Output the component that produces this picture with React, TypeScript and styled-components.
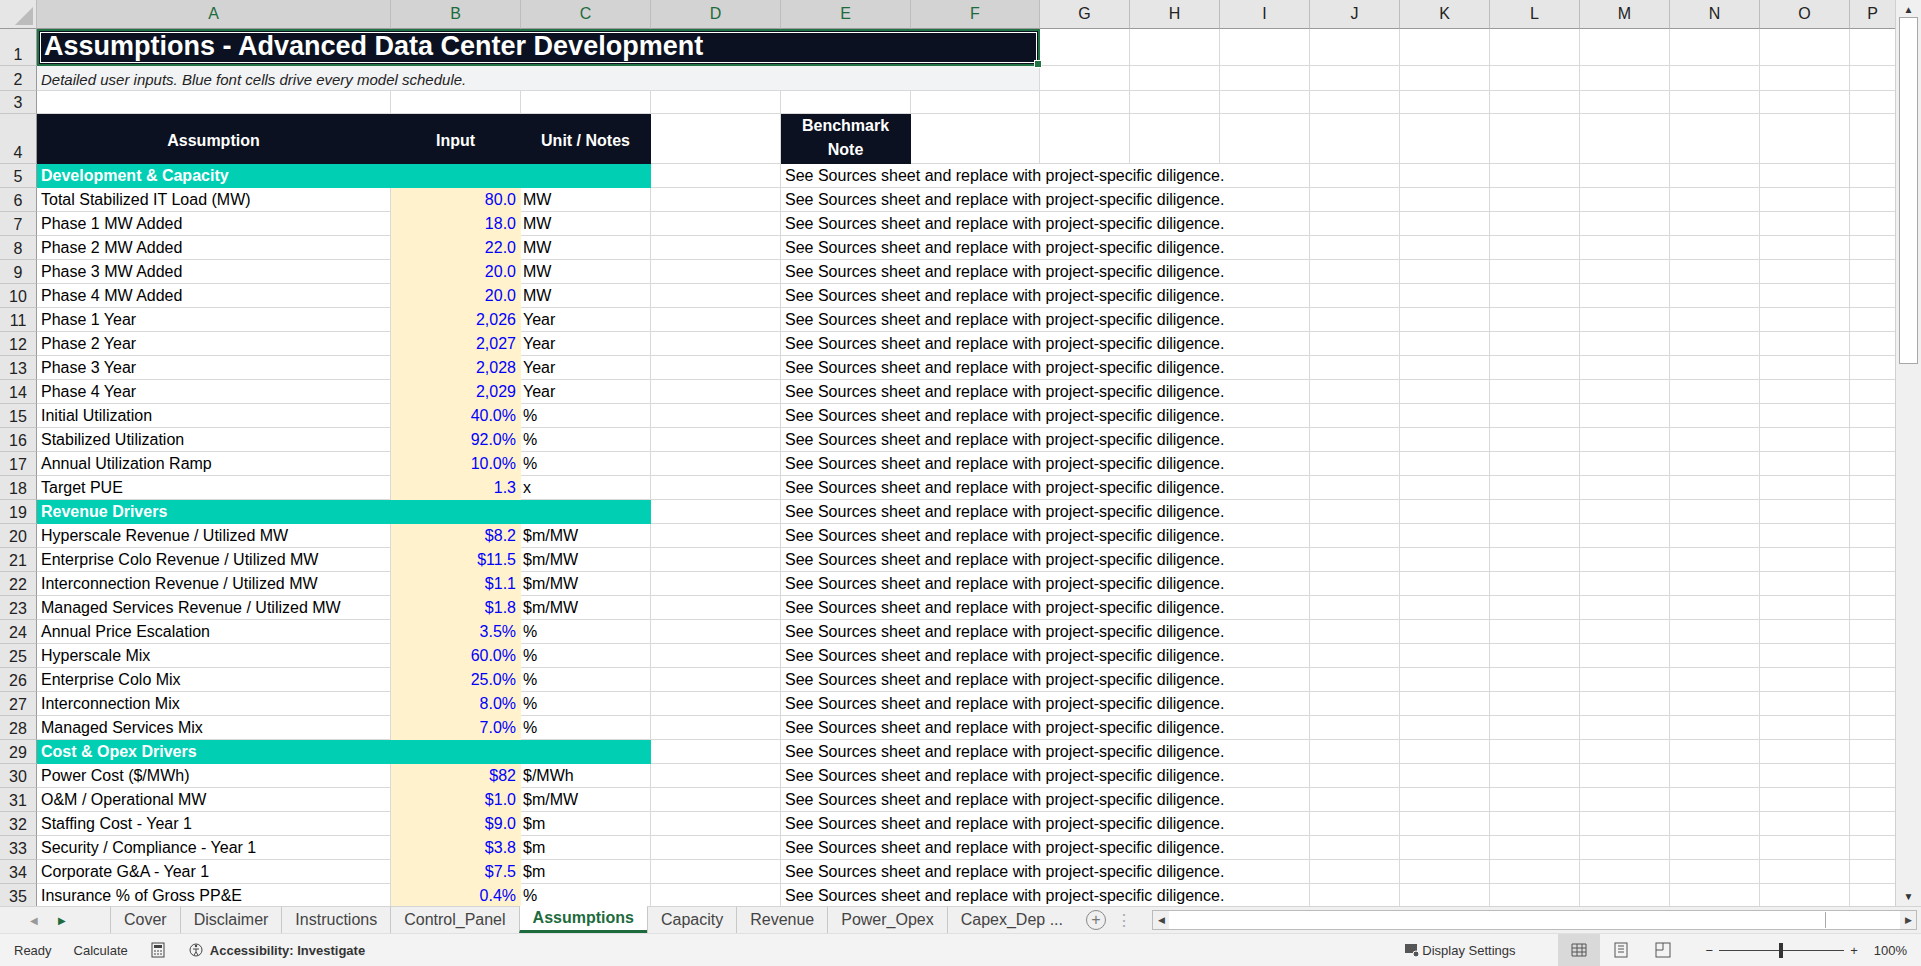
import React from "react";
import styled, { createGlobalStyle, css } from "styled-components";

const Global = createGlobalStyle`
  html, body { margin: 0; padding: 0; overflow: hidden; }
  body { font-family: "Liberation Sans", Arial, sans-serif; }
`;

const COLS = "37px 354px 130px 130px 130px 130px 129px repeat(9, 90px) 46px";
const NOTE = "See Sources sheet and replace with project-specific diligence.";

const Page = styled.div`
  width: 1921px; height: 966px; display: flex; flex-direction: column; background: #fff;
`;
const SheetArea = styled.div`
  flex: 1; display: flex; overflow: hidden;
`;
const Grid = styled.div`
  flex: 1; display: grid; grid-template-columns: ${COLS};
  grid-auto-rows: 24px; overflow: hidden; align-content: start;
  grid-template-rows: 29px 37px 25px 23px 50px;
`;
const ColHead = styled.div<{ $sel?: boolean }>`
  background: ${p => (p.$sel ? "#d3d3d3" : "#e6e6e6")};
  color: ${p => (p.$sel ? "#1d6b3c" : "#222")};
  border-right: 1px solid #bdbdbd; border-bottom: 1px solid #9a9a9a;
  display: flex; align-items: center; justify-content: center;
  font-size: 16px; box-sizing: border-box;
`;
const Corner = styled(ColHead)`
  background: #e6e6e6; position: relative;
  &::after { content: ""; position: absolute; right: 3px; bottom: 3px;
    border-left: 18px solid transparent; border-bottom: 18px solid #bcbcbc; }
`;
const RowHead = styled.div`
  background: #e6e6e6; border-right: 1px solid #9a9a9a; border-bottom: 1px solid #c8c8c8;
  display: flex; align-items: flex-end; justify-content: center; padding-bottom: 1px;
  font-size: 16px; color: #222; box-sizing: border-box;
`;
type Kind = "plain" | "dark" | "teal" | "input" | "sub";
const Cell = styled.div<{ $k?: Kind; $span?: number; $align?: string; $bold?: boolean }>`
  box-sizing: border-box; border-right: 1px solid #d9d9d9; border-bottom: 1px solid #d9d9d9;
  font-size: 16px; color: #000; white-space: nowrap; padding: 0 4px;
  display: flex; align-items: flex-end; padding-bottom: 2px;
  justify-content: ${p => p.$align || "flex-start"};
  ${p => p.$span && css`grid-column: span ${p.$span};`}
  ${p => p.$bold && css`font-weight: bold;`}
  ${p => p.$k === "dark" && css`background: #0b1120; color: #fff; font-weight: bold; border-color: #0b1120;`}
  ${p => p.$k === "teal" && css`background: #00cfb4; color: #fff; font-weight: bold; border-color: #00cfb4;`}
  ${p => p.$k === "input" && css`background: #fff2cc; color: #0000ff; border-color: #fff2cc;`}
  ${p => p.$k === "sub" && css`background: #f2f3f5; font-style: italic; font-size: 15px; color: #222;`}
`;
const Title = styled(Cell)`
  grid-column: span 6; background: #0b1120; color: #fff; font-weight: bold; font-size: 27px;
  border: 2px solid #217346; outline: 1px solid #fff; outline-offset: -4px; padding-left: 5px;
  position: relative;
  &::after { content: ""; position: absolute; right: -4px; bottom: -4px; width: 6px; height: 6px; background: #217346; border: 1px solid #fff; }
`;
const HeadCell = styled(Cell)`
  background: #0b1120; color: #fff; font-weight: bold; border-color: #0b1120;
  justify-content: center; align-items: center; text-align: center; white-space: normal; line-height: 24px;
  padding-top: 6px;
`;
const VScroll = styled.div`
  width: 25px; background: #f0f0f0; border-left: 1px solid #d0d0d0; display: flex; flex-direction: column;
  align-items: center; justify-content: space-between; font-size: 10px; color: #333;
`;
const Thumb = styled.div`
  width: 17px; height: 345px; background: #fff; border: 1px solid #a8a8a8; margin-top: 2px; flex: none;
`;
const TabBar = styled.div`
  height: 26px; background: #f0f0f0; display: flex; align-items: stretch; font-size: 16px; color: #444;
  border-top: 1px solid #d4d4d4;
`;
const Arrows = styled.div`
  width: 110px; display: flex; align-items: center; gap: 20px; padding-left: 30px; color: #999; font-size: 10px;
  box-sizing: border-box;
`;
const Tab = styled.div<{ $active?: boolean }>`
  padding: 0 13px; display: flex; align-items: center; border-left: 1px solid #c8c8c8;
  ${p => p.$active && css`background: #fff; color: #1d6b3c; font-weight: bold; border-bottom: 3px solid #1d6b3c; margin-top: -1px;`}
`;
const AddBtn = styled.div`
  width: 18px; height: 18px; border: 1px solid #888; border-radius: 50%; margin: auto 10px;
  display: flex; align-items: center; justify-content: center; color: #777; font-size: 16px; line-height: 1;
`;
const HScroll = styled.div`
  flex: 1; margin: 3px 4px 3px 20px; display: flex; align-items: stretch; border: 1px solid #bbb; background: #fff;
`;
const HBtn = styled.div`
  width: 16px; display: flex; align-items: center; justify-content: center; font-size: 9px; background: #f0f0f0;
`;
const HThumb = styled.div` width: 655px; border-right: 1px solid #aaa; margin: 1px; `;
const Status = styled.div`
  height: 32px; background: #f3f3f3; display: flex; align-items: center; font-size: 13px; color: #333;
  padding: 0 14px; gap: 22px; border-top: 1px solid #e0e0e0;
`;
const Spacer = styled.div` flex: 1; `;
const ViewBtn = styled.div<{ $on?: boolean }>`
  width: 42px; height: 32px; display: flex; align-items: center; justify-content: center;
  ${p => p.$on && css`background: #d9d9d9;`}
`;
const Zoom = styled.div` display: flex; align-items: center; gap: 6px; `;
const Slider = styled.div`
  width: 125px; height: 1px; background: #444; position: relative;
  &::after { content: ""; position: absolute; left: 60px; top: -7px; width: 4px; height: 15px; background: #333; }
`;

type Row =
  | { n: number; section: string }
  | { n: number; label: string; val: string; unit: string };

const rows: Row[] = [
  { n: 5, section: "Development & Capacity" },
  { n: 6, label: "Total Stabilized IT Load (MW)", val: "80.0", unit: "MW" },
  { n: 7, label: "Phase 1 MW Added", val: "18.0", unit: "MW" },
  { n: 8, label: "Phase 2 MW Added", val: "22.0", unit: "MW" },
  { n: 9, label: "Phase 3 MW Added", val: "20.0", unit: "MW" },
  { n: 10, label: "Phase 4 MW Added", val: "20.0", unit: "MW" },
  { n: 11, label: "Phase 1 Year", val: "2,026", unit: "Year" },
  { n: 12, label: "Phase 2 Year", val: "2,027", unit: "Year" },
  { n: 13, label: "Phase 3 Year", val: "2,028", unit: "Year" },
  { n: 14, label: "Phase 4 Year", val: "2,029", unit: "Year" },
  { n: 15, label: "Initial Utilization", val: "40.0%", unit: "%" },
  { n: 16, label: "Stabilized Utilization", val: "92.0%", unit: "%" },
  { n: 17, label: "Annual Utilization Ramp", val: "10.0%", unit: "%" },
  { n: 18, label: "Target PUE", val: "1.3", unit: "x" },
  { n: 19, section: "Revenue Drivers" },
  { n: 20, label: "Hyperscale Revenue / Utilized MW", val: "$8.2", unit: "$m/MW" },
  { n: 21, label: "Enterprise Colo Revenue / Utilized MW", val: "$11.5", unit: "$m/MW" },
  { n: 22, label: "Interconnection Revenue / Utilized MW", val: "$1.1", unit: "$m/MW" },
  { n: 23, label: "Managed Services Revenue / Utilized MW", val: "$1.8", unit: "$m/MW" },
  { n: 24, label: "Annual Price Escalation", val: "3.5%", unit: "%" },
  { n: 25, label: "Hyperscale Mix", val: "60.0%", unit: "%" },
  { n: 26, label: "Enterprise Colo Mix", val: "25.0%", unit: "%" },
  { n: 27, label: "Interconnection Mix", val: "8.0%", unit: "%" },
  { n: 28, label: "Managed Services Mix", val: "7.0%", unit: "%" },
  { n: 29, section: "Cost & Opex Drivers" },
  { n: 30, label: "Power Cost ($/MWh)", val: "$82", unit: "$/MWh" },
  { n: 31, label: "O&M / Operational MW", val: "$1.0", unit: "$m/MW" },
  { n: 32, label: "Staffing Cost - Year 1", val: "$9.0", unit: "$m" },
  { n: 33, label: "Security / Compliance - Year 1", val: "$3.8", unit: "$m" },
  { n: 34, label: "Corporate G&A - Year 1", val: "$7.5", unit: "$m" },
  { n: 35, label: "Insurance % of Gross PP&E", val: "0.4%", unit: "%" },
];

const letters = ["A","B","C","D","E","F","G","H","I","J","K","L","M","N","O","P"];
const Blanks = ({ n }: { n: number }) => <>{Array.from({ length: n }, (_, i) => <Cell key={i} />)}</>;

export default function App() {
  return (
    <Page>
      <Global />
      <SheetArea>
        <Grid>
          <Corner />
          {letters.map((l, i) => <ColHead key={l} $sel={i < 6}>{l}</ColHead>)}

          <RowHead>1</RowHead>
          <Title>Assumptions - Advanced Data Center Development</Title>
          <Blanks n={10} />

          <RowHead>2</RowHead>
          <Cell $k="sub" $span={6}>Detailed user inputs. Blue font cells drive every model schedule.</Cell>
          <Blanks n={10} />

          <RowHead>3</RowHead>
          <Blanks n={16} />

          <RowHead>4</RowHead>
          <HeadCell>Assumption</HeadCell>
          <HeadCell>Input</HeadCell>
          <HeadCell>Unit / Notes</HeadCell>
          <Cell />
          <HeadCell style={{ paddingTop: 0 }}>Benchmark Note</HeadCell>
          <Blanks n={11} />

          {rows.map(r => (
            <React.Fragment key={r.n}>
              <RowHead>{r.n}</RowHead>
              {"section" in r ? (
                <Cell $k="teal" $span={3}>{r.section}</Cell>
              ) : (
                <>
                  <Cell>{r.label}</Cell>
                  <Cell $k="input" $align="flex-end">{r.val}</Cell>
                  <Cell style={{ paddingLeft: 2 }}>{r.unit}</Cell>
                </>
              )}
              <Cell />
              <Cell $span={5}>{NOTE}</Cell>
              <Blanks n={7} />
            </React.Fragment>
          ))}
        </Grid>
        <VScroll>
          <div style={{ marginTop: 4 }}>▲</div>
          <Thumb />
          <div style={{ flex: 1 }} />
          <div style={{ marginBottom: 4 }}>▼</div>
        </VScroll>
      </SheetArea>
      <TabBar>
        <Arrows><span>◀</span><span style={{ color: "#1d6b3c" }}>▶</span></Arrows>
        {["Cover","Disclaimer","Instructions","Control_Panel","Assumptions","Capacity","Revenue","Power_Opex","Capex_Dep ..."].map(t => (
          <Tab key={t} $active={t === "Assumptions"}>{t}</Tab>
        ))}
        <AddBtn>+</AddBtn>
        <span style={{ alignSelf: "center", color: "#aaa" }}>⋮</span>
        <HScroll>
          <HBtn>◀</HBtn>
          <HThumb />
          <Spacer />
          <HBtn>▶</HBtn>
        </HScroll>
      </TabBar>
      <Status>
        <span>Ready</span>
        <span>Calculate</span>
        <svg width="16" height="16" viewBox="0 0 16 16"><rect x="2" y="1" width="12" height="14" fill="none" stroke="#444"/><rect x="4" y="3" width="8" height="3" fill="#444"/><path d="M4 9h2M7 9h2M10 9h2M4 12h2M7 12h2M10 12h2" stroke="#444"/></svg>
        <span style={{ display: "flex", alignItems: "center", gap: 4, fontWeight: "bold" }}>
          <svg width="18" height="16" viewBox="0 0 18 16"><circle cx="8" cy="8" r="6" fill="none" stroke="#444"/><circle cx="8" cy="4" r="1.2" fill="#444"/><path d="M5 7h6M8 7v3l-2 3M8 10l2 3" stroke="#444" fill="none"/></svg>
          Accessibility: Investigate
        </span>
        <Spacer />
        <span style={{ display: "flex", alignItems: "center", gap: 2, marginRight: 20 }}>
          <svg width="16" height="16" viewBox="0 0 16 16"><rect x="1" y="2" width="12" height="9" fill="#555"/><circle cx="12" cy="12" r="3" fill="#555" stroke="#fff"/></svg>
          Display Settings
        </span>
        <div style={{ display: "flex", gap: 0 }}>
          <ViewBtn $on><svg width="16" height="14"><path d="M1 1h14v12H1zM1 5h14M1 9h14M6 1v12M11 1v12" fill="none" stroke="#555"/></svg></ViewBtn>
          <ViewBtn><svg width="14" height="16"><rect x="1" y="1" width="12" height="14" fill="none" stroke="#555"/><path d="M4 4h6M4 7h6M4 10h6" stroke="#555"/></svg></ViewBtn>
          <ViewBtn><svg width="16" height="16"><rect x="1" y="1" width="14" height="14" fill="none" stroke="#555"/><path d="M8 1v7H1" fill="none" stroke="#555"/></svg></ViewBtn>
        </div>
        <Zoom><span>−</span><Slider /><span>+</span><span style={{ marginLeft: 10 }}>100%</span></Zoom>
      </Status>
    </Page>
  );
}
